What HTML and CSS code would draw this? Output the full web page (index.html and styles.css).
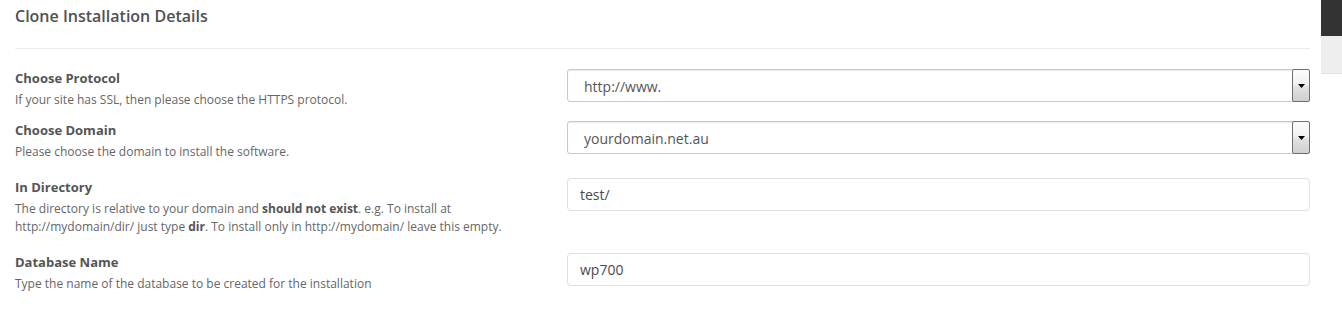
FILE: index.html
```html
<!DOCTYPE html>
<html>
<head>
<meta charset="utf-8">
<link rel="stylesheet" href="styles.css">
</head>
<body>
<div class="page">
  <div class="main">
    <h2 class="title">Clone Installation Details</h2>
    <hr class="rule">
    <div class="form">
      <div class="row row-compact">
        <div class="info">
          <div class="label">Choose Protocol</div>
          <div class="desc">If your site has SSL, then please choose the HTTPS protocol.</div>
        </div>
        <div class="field">
          <div class="select">
            <span class="select-text">http://www.</span>
            <span class="select-btn"><svg width="7" height="4" viewBox="0 0 7 4"><path d="M0 0H7L3.5 4Z" fill="#000"/></svg></span>
          </div>
        </div>
      </div>
      <div class="row">
        <div class="info">
          <div class="label">Choose Domain</div>
          <div class="desc">Please choose the domain to install the software.</div>
        </div>
        <div class="field">
          <div class="select">
            <span class="select-text">yourdomain.net.au</span>
            <span class="select-btn"><svg width="7" height="4" viewBox="0 0 7 4"><path d="M0 0H7L3.5 4Z" fill="#000"/></svg></span>
          </div>
        </div>
      </div>
      <div class="row">
        <div class="info">
          <div class="label">In Directory</div>
          <div class="desc">The directory is relative to your domain and <b>should not exist</b>. e.g. To install at<br>http://mydomain/dir/ just type <b>dir</b>. To install only in http://mydomain/ leave this empty.</div>
        </div>
        <div class="field">
          <div class="input">test/</div>
        </div>
      </div>
      <div class="row">
        <div class="info">
          <div class="label">Database Name</div>
          <div class="desc">Type the name of the database to be created for the installation</div>
        </div>
        <div class="field">
          <div class="input">wp700</div>
        </div>
      </div>
    </div>
  </div>
  <div class="scrollbar">
    <div class="thumb"></div>
    <div class="track"></div>
  </div>
</div>
</body>
</html>
```
FILE: styles.css
```css
html, body {
  margin: 0;
  padding: 0;
  background: #fff;
}
body {
  font-family: "Open Sans", "Liberation Sans", sans-serif;
  color: #555;
}
.page {
  display: flex;
  align-items: flex-start;
  min-height: 312px;
}
.main {
  flex: 1;
  padding: 0 11px 0 15px;
}
.title {
  margin: 0;
  padding-top: 6px;
  font-size: 16px;
  line-height: 20px;
  font-weight: 600;
  color: #505050;
}
.rule {
  margin: 22px 0 0 0;
  border: 0;
  border-top: 1px solid #ececec;
  height: 0;
}
.form {
  padding-top: 20px;
}
.row {
  display: grid;
  grid-template-columns: 552px 1fr;
  margin-bottom: 17px;
}
.row-compact {
  margin-bottom: 12px;
}
.label {
  font-size: 13px;
  line-height: 18px;
  font-weight: 700;
  color: #555;
  margin-bottom: 4px;
}
.desc {
  font-size: 12px;
  line-height: 18px;
  color: #666;
}
.desc b {
  font-weight: 700;
  color: #555;
}
.select {
  display: flex;
  align-items: stretch;
  height: 33px;
  box-sizing: border-box;
  border: 1px solid #c8c8c8;
  border-radius: 3px;
  box-shadow: inset 0 1px 1px rgba(0,0,0,0.08);
  background: #fff;
}
.select-text {
  flex: 1;
  display: flex;
  align-items: center;
  padding-left: 16px;
  padding-top: 1px;
  font-size: 14px;
  color: #555;
}
.select-btn {
  width: 16px;
  margin: -1px -1px -1px 0;
  border: 1px solid #6f6f6f;
  border-radius: 2px;
  background: linear-gradient(#fbfbfb 0%, #f2f2f2 45%, #e2e2e2 55%, #cfcfcf 100%);
  display: flex;
  align-items: center;
  justify-content: center;
}
.select-btn svg {
  display: block;
}
.input {
  height: 33px;
  box-sizing: border-box;
  border: 1px solid #e0e0e0;
  border-radius: 4px;
  padding-left: 12px;
  display: flex;
  align-items: center;
  font-size: 14px;
  color: #4a4a4a;
}
.scrollbar {
  width: 21px;
  flex: none;
}
.thumb {
  height: 36px;
  background: #333;
}
.track {
  height: 37px;
  background: #eee;
  border-bottom: 1px solid #e2e2e2;
}
```
